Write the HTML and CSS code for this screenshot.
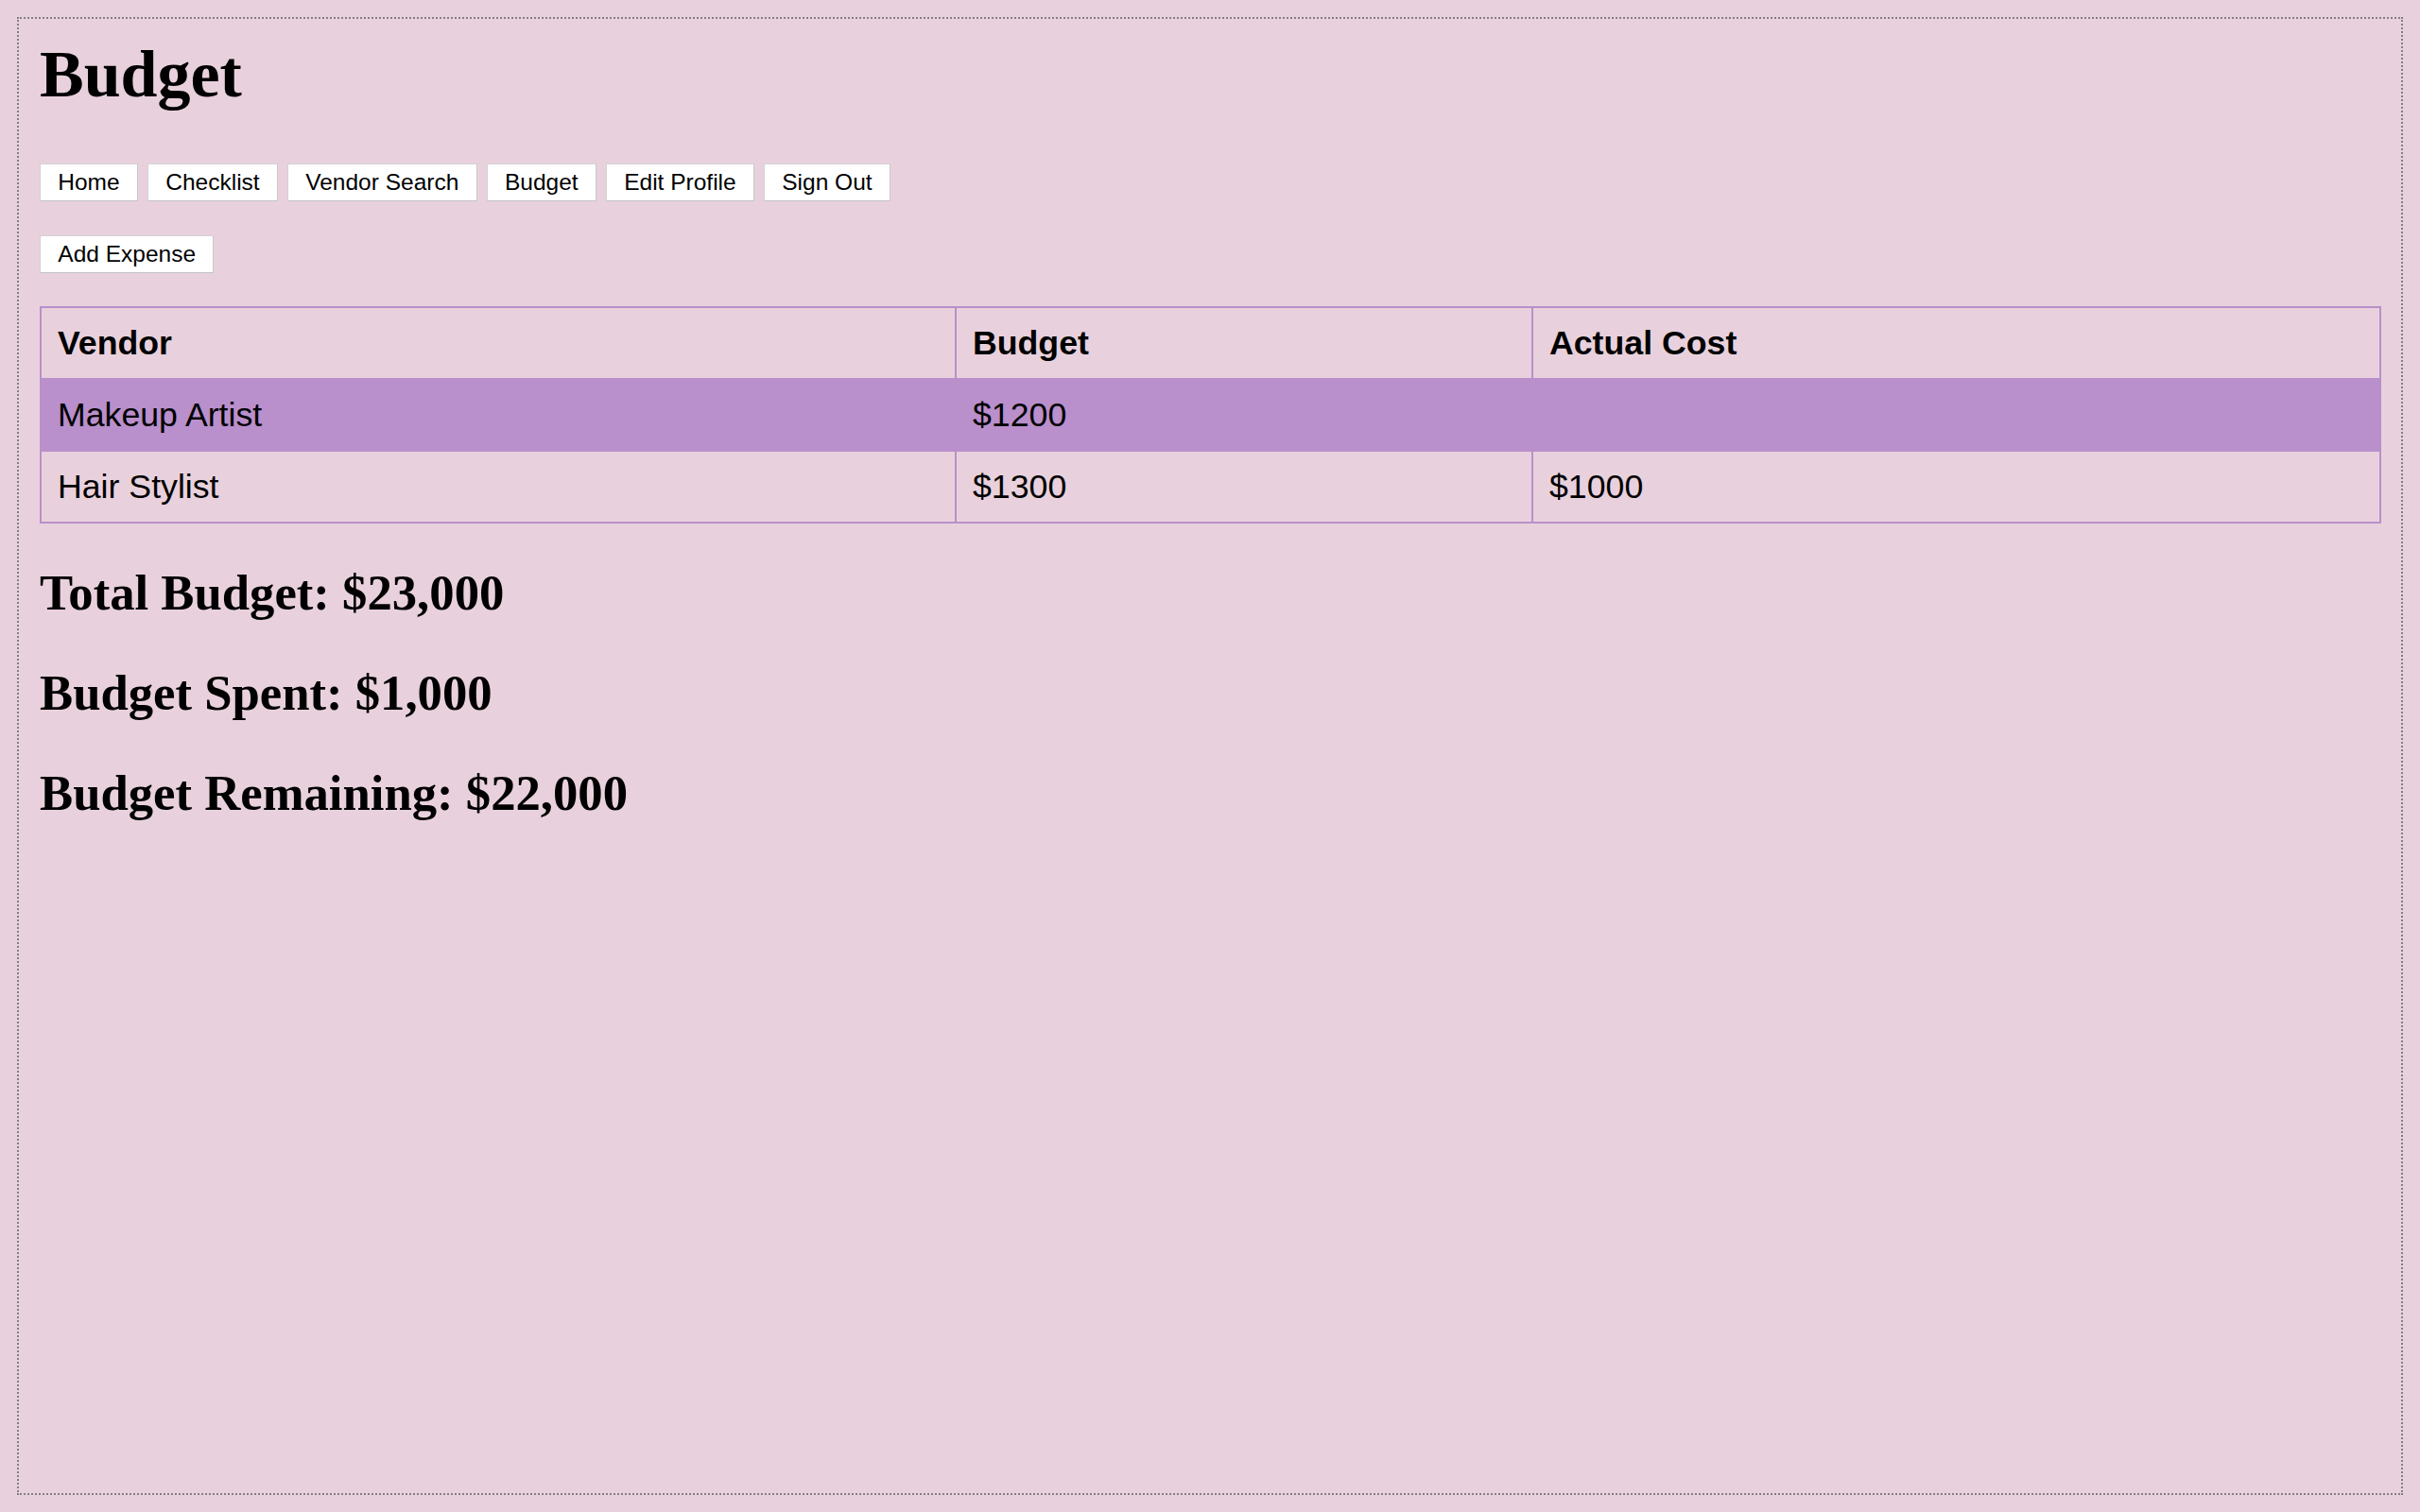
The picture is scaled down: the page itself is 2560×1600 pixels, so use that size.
FILE: index.html
```html
<!DOCTYPE html>
<html lang="en">
<head>
<meta charset="utf-8">
<title>Budget</title>
<link rel="stylesheet" href="styles.css">
</head>
<body>
<div class="page">
  <h1 class="title">Budget</h1>
  <nav class="nav">
    <button class="btn">Home</button>
    <button class="btn">Checklist</button>
    <button class="btn">Vendor Search</button>
    <button class="btn">Budget</button>
    <button class="btn">Edit Profile</button>
    <button class="btn">Sign Out</button>
  </nav>
  <div class="actions">
    <button class="btn">Add Expense</button>
  </div>
  <table class="budget-table">
    <thead>
      <tr>
        <th class="col-vendor">Vendor</th>
        <th class="col-budget">Budget</th>
        <th class="col-actual">Actual Cost</th>
      </tr>
    </thead>
    <tbody>
      <tr class="row-highlight">
        <td>Makeup Artist</td>
        <td>$1200</td>
        <td></td>
      </tr>
      <tr>
        <td>Hair Stylist</td>
        <td>$1300</td>
        <td>$1000</td>
      </tr>
    </tbody>
  </table>
  <h2 class="summary">Total Budget: $23,000</h2>
  <h2 class="summary">Budget Spent: $1,000</h2>
  <h2 class="summary">Budget Remaining: $22,000</h2>
</div>
</body>
</html>
```

FILE: styles.css
```css
html, body {
  margin: 0;
  padding: 0;
  background: #e8d1dc;
}

body {
  padding: 18px 0 0 18px;
  font-family: "Liberation Serif", "Times New Roman", serif;
  color: #000;
}

.page {
  box-sizing: border-box;
  width: 2524px;
  height: 1564px;
  border: 2px dotted #808080;
  padding: 19px 21px 0 22px;
}

.title {
  margin: 0;
  font-family: "Liberation Serif", "Times New Roman", serif;
  font-weight: bold;
  font-size: 70px;
  line-height: 80px;
}

.nav {
  display: flex;
  gap: 10px;
  margin-top: 54px;
}

.actions {
  display: flex;
  margin-top: 36px;
}

.btn {
  font-family: "Liberation Sans", Arial, sans-serif;
  font-size: 24.5px;
  line-height: 28px;
  padding: 5px 18.3px;
  margin: 0;
  background: #ffffff;
  color: #000;
  border: 1px solid #d2d2d2;
  border-bottom-color: #c2c2c2;
  border-right-color: #c8c8c8;
  border-radius: 0;
}

.budget-table {
  margin-top: 35px;
  width: 100%;
  table-layout: fixed;
  border-collapse: separate;
  border-spacing: 0;
  border: 1px solid #b98fcc;
  font-family: "Liberation Sans", Arial, sans-serif;
  font-size: 35.7px;
  line-height: 40px;
}

.budget-table th,
.budget-table td {
  box-sizing: border-box;
  border: 1px solid #b98fcc;
  padding: 17px 17px;
  text-align: left;
  height: 76px;
}

.budget-table th {
  font-weight: bold;
}

.col-vendor { width: 968px; }
.col-budget { width: 610px; }

.row-highlight td {
  background: #b98fcc;
}

.summary {
  margin: 0;
  font-family: "Liberation Serif", "Times New Roman", serif;
  font-weight: bold;
  font-size: 52.7px;
  line-height: 60px;
}

.budget-table + .summary {
  margin-top: 43px;
}

.summary + .summary {
  margin-top: 46px;
}
```
